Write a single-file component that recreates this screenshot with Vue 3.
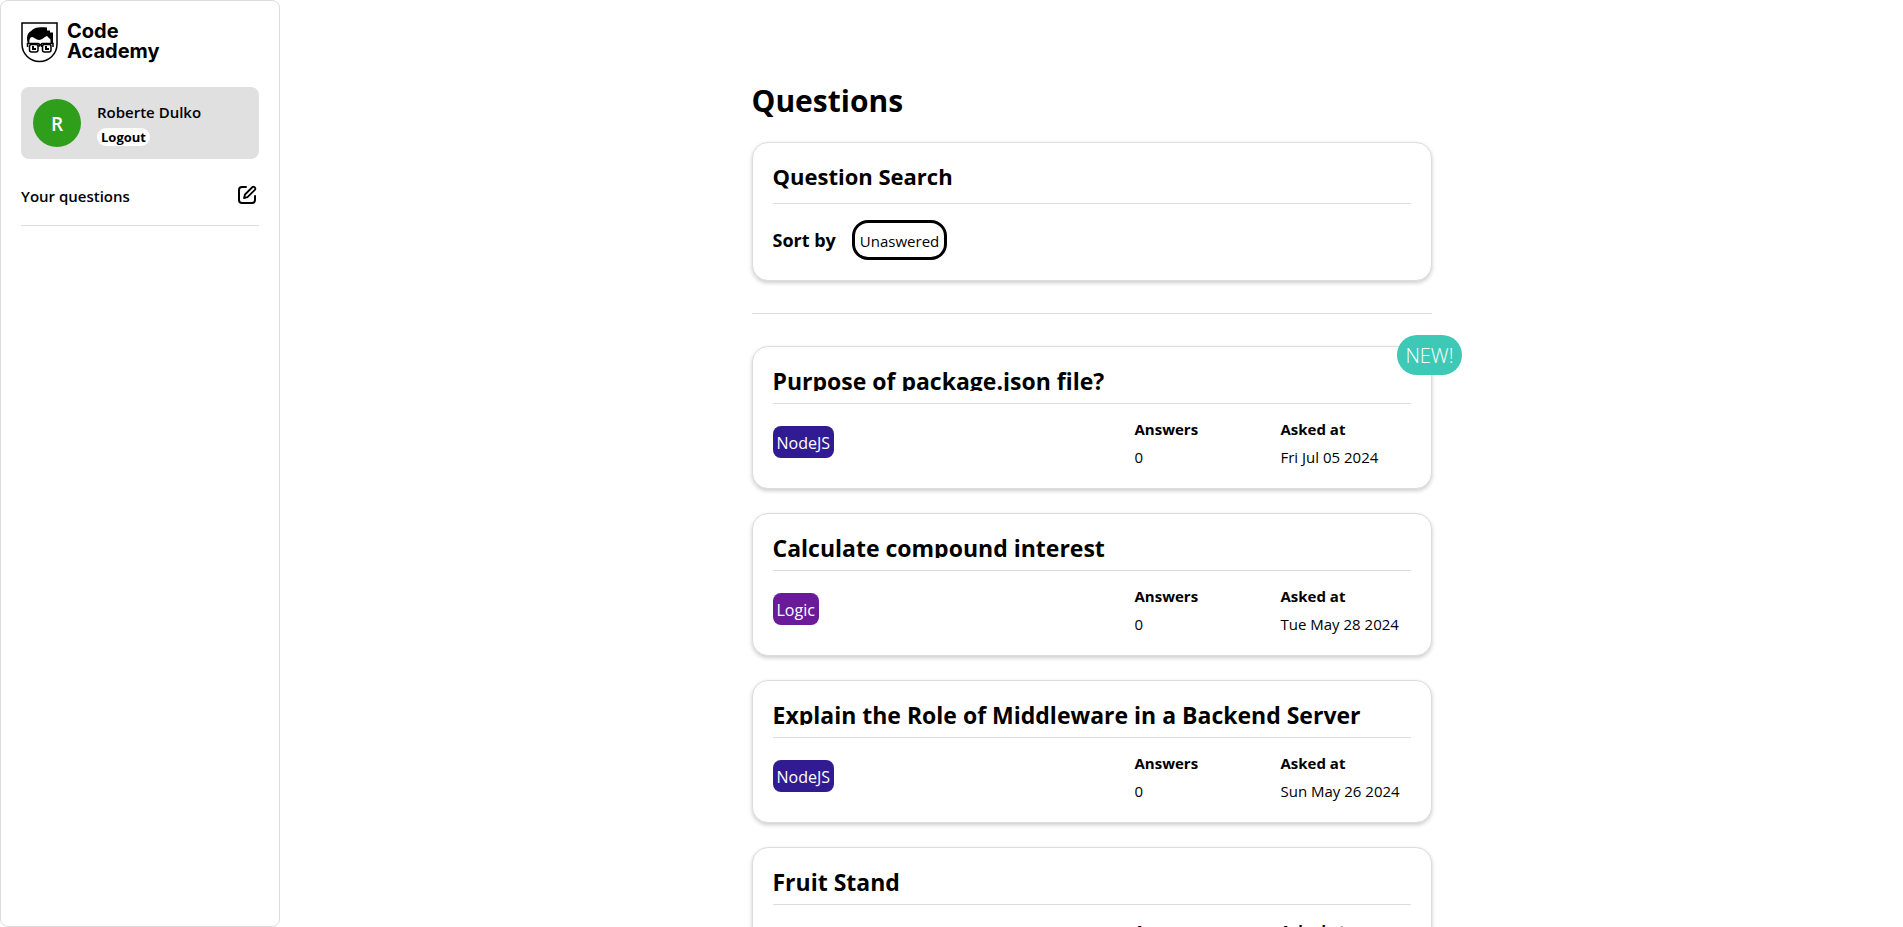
<script setup>
const questions = [
  { id: 1, title: 'Purpose of package.json file?', tag: 'NodeJS', tone: 'node', answers: 0, asked: 'Fri Jul 05 2024', isNew: true },
  { id: 2, title: 'Calculate compound interest', tag: 'Logic', tone: 'logic', answers: 0, asked: 'Tue May 28 2024' },
  { id: 3, title: 'Explain the Role of Middleware in a Backend Server', tag: 'NodeJS', tone: 'node', answers: 0, asked: 'Sun May 26 2024' },
  { id: 4, title: 'Fruit Stand', tag: 'Logic', tone: 'logic', answers: 0, asked: 'Sun May 26 2024' }
]
</script>

<template>
  <div class="layout">
    <aside class="sidebar">
      <a class="brand" href="#">
        <svg class="brand-mark" viewBox="0 0 38 42" aria-hidden="true">
          <path d="M1 2H36V23C36 33 28 40.500 18.500 40.500S1 33 1 23Z" fill="#fff" stroke="#000" stroke-width="1.500" />
          <path d="M7 23C5 17 6 12 10 10C14 5.500 19 6 26 6.500V9.500H29V11.500H32V22H29.500V18.500L26 15C23 16 21 19 18 19C15 19 13 16 11 16C9 16 8 19 8.500 23Z" fill="#000" />
          <g fill="none" stroke="#000" stroke-width="1.500">
            <rect x="8.500" y="23.500" width="8.500" height="7.500" rx="2" />
            <rect x="21.500" y="23.500" width="8.500" height="7.500" rx="2" />
            <path d="M6.500 26V22.500H17C18.500 22.500 18.500 24 19.200 24S20 22.500 21.500 22.500H32V26M18 26V23.500M20.500 26V23.500" />
          </g>
          <path d="M11 25H13V27H15V29H11ZM24 25H26V27H28V29H24Z" fill="#000" />
        </svg>
        <span class="brand-name">Code<br />Academy</span>
      </a>

      <section class="user">
        <span class="avatar">R</span>
        <div class="user-info">
          <span class="user-name">Roberte Dulko</span>
          <button class="logout" type="button">Logout</button>
        </div>
      </section>

      <div class="own">
        <span>Your questions</span>
        <button class="compose" type="button" aria-label="Ask a question">
          <svg viewBox="0 0 20 20" aria-hidden="true">
            <g fill="none" stroke="#000" stroke-width="2" stroke-linecap="round" stroke-linejoin="round">
              <path d="M9 2H5C3 2 2 3 2 5V15C2 17 3 18 5 18H15C17 18 18 17 18 15V11" />
              <path d="M7 13L8 9.500L15 2.500C16 1.500 17 1.700 17.800 2.400C18.500 3.200 18.500 4.200 17.600 5.100L10.500 12.200Z" stroke-width="1.800" />
            </g>
          </svg>
        </button>
      </div>
    </aside>

    <main class="content">
      <h1>Questions</h1>

      <section class="card">
        <h2 class="search-title">Question Search</h2>
        <div class="sort">
          <h3>Sort by</h3>
          <button class="filter" type="button">Unaswered</button>
        </div>
      </section>

      <hr class="divider" />

      <div class="list">
        <article v-for="q in questions" :key="q.id" class="card">
          <span v-if="q.isNew" class="badge">NEW!</span>
          <h2 class="title">{{ q.title }}</h2>
          <div class="details">
            <div><span class="tag" :class="q.tone">{{ q.tag }}</span></div>
            <div class="fact"><strong>Answers</strong><span>{{ q.answers }}</span></div>
            <div class="fact"><strong>Asked at</strong><span>{{ q.asked }}</span></div>
          </div>
        </article>
      </div>
    </main>
  </div>
</template>

<style>
body {
  margin: 0;
  background: #fff;
}
</style>

<style scoped>
* {
  box-sizing: border-box;
}

.layout {
  display: flex;
  height: 100vh;
  overflow: hidden;
  color: #000;
  font: 15px/24px "Open Sans", "Noto Sans", sans-serif;
}

button {
  font: inherit;
  color: inherit;
  cursor: pointer;
}

h1, h2, h3 {
  margin: 0;
  font-weight: 700;
}

.sidebar {
  flex: none;
  width: 280px;
  padding: 20px;
  border: 1px solid #ddd;
  border-radius: 8px;
}

.brand {
  display: flex;
  align-items: flex-start;
  gap: 8px;
  color: #000;
  text-decoration: none;
}

.brand-mark {
  width: 38px;
  height: 42px;
}

.brand-name {
  font: 700 20px/20px Inter, sans-serif;
}

.user {
  display: flex;
  align-items: center;
  gap: 16px;
  margin-top: 24px;
  padding: 12px;
  border-radius: 8px;
  background: #e0e0e0;
}

.avatar {
  display: flex;
  align-items: center;
  justify-content: center;
  width: 48px;
  height: 48px;
  padding-top: 2px;
  border-radius: 50%;
  background: #2e9e1b;
  color: #fff;
  font-size: 19px;
  font-weight: 600;
}

.user-info {
  display: flex;
  flex-direction: column;
  align-items: flex-start;
  gap: 4px;
}

.user-name, .own {
  font-weight: 600;
}

.logout {
  padding: 0 4px;
  border: 0;
  border-radius: 10px;
  background: #fff;
  font-size: 13px;
  line-height: 18px;
  font-weight: 700;
}

.own {
  display: flex;
  align-items: flex-start;
  justify-content: space-between;
  margin-top: 24px;
  padding-bottom: 16px;
  border-bottom: 1px solid #ddd;
  line-height: 26px;
}

.compose {
  display: flex;
  padding: 2px;
  border: 0;
  background: none;
}

.compose svg {
  width: 20px;
  height: 20px;
}

.content {
  width: 680px;
  margin: 0 auto;
  padding-top: 81px;
}

h1 {
  margin-bottom: 21px;
  font-size: 30px;
  line-height: 40px;
}

.card {
  position: relative;
  padding: 20px;
  border: 1px solid #ddd;
  border-radius: 16px;
  background: #fff;
  box-shadow: 0 2px 4px rgba(0, 0, 0, 0.2);
}

.search-title {
  padding-bottom: 14px;
  border-bottom: 1px solid #ddd;
  font-size: 22px;
  line-height: 26px;
}

.sort {
  display: flex;
  align-items: center;
  gap: 16px;
  margin-top: 16px;
}

h3 {
  font-size: 18px;
}

.filter {
  height: 40px;
  padding: 2px 5px 0;
  border: 3px solid #000;
  border-radius: 16px;
  background: #fff;
}

.divider {
  margin: 32px 0;
  border: 0;
  border-top: 1px solid #ddd;
}

.list {
  display: flex;
  flex-direction: column;
  gap: 24px;
}

.title {
  height: 24px;
  overflow: hidden;
  font-size: 23px;
  line-height: 28px;
}

.details {
  display: grid;
  grid-template-columns: 1fr 146px 130px;
  align-items: center;
  margin-top: 12px;
  padding-top: 12px;
  border-top: 1px solid #ddd;
}

.fact {
  display: flex;
  flex-direction: column;
  gap: 2px;
  line-height: 26px;
  height: 52px;
}

.tag {
  display: inline-block;
  height: 32px;
  padding: 0 4px;
  border-radius: 8px;
  color: #fff;
  font-size: 16px;
  line-height: 34px;
  vertical-align: middle;
}

.node {
  background: #311b92;
}

.logic {
  background: #6a1b9a;
}

.badge {
  position: absolute;
  top: -12px;
  right: -31px;
  height: 40px;
  padding: 0 8px;
  border-radius: 20px;
  background: #3dc9b6;
  color: #fff;
  font-size: 20px;
  line-height: 42px;
  font-weight: 300;
}
</style>
